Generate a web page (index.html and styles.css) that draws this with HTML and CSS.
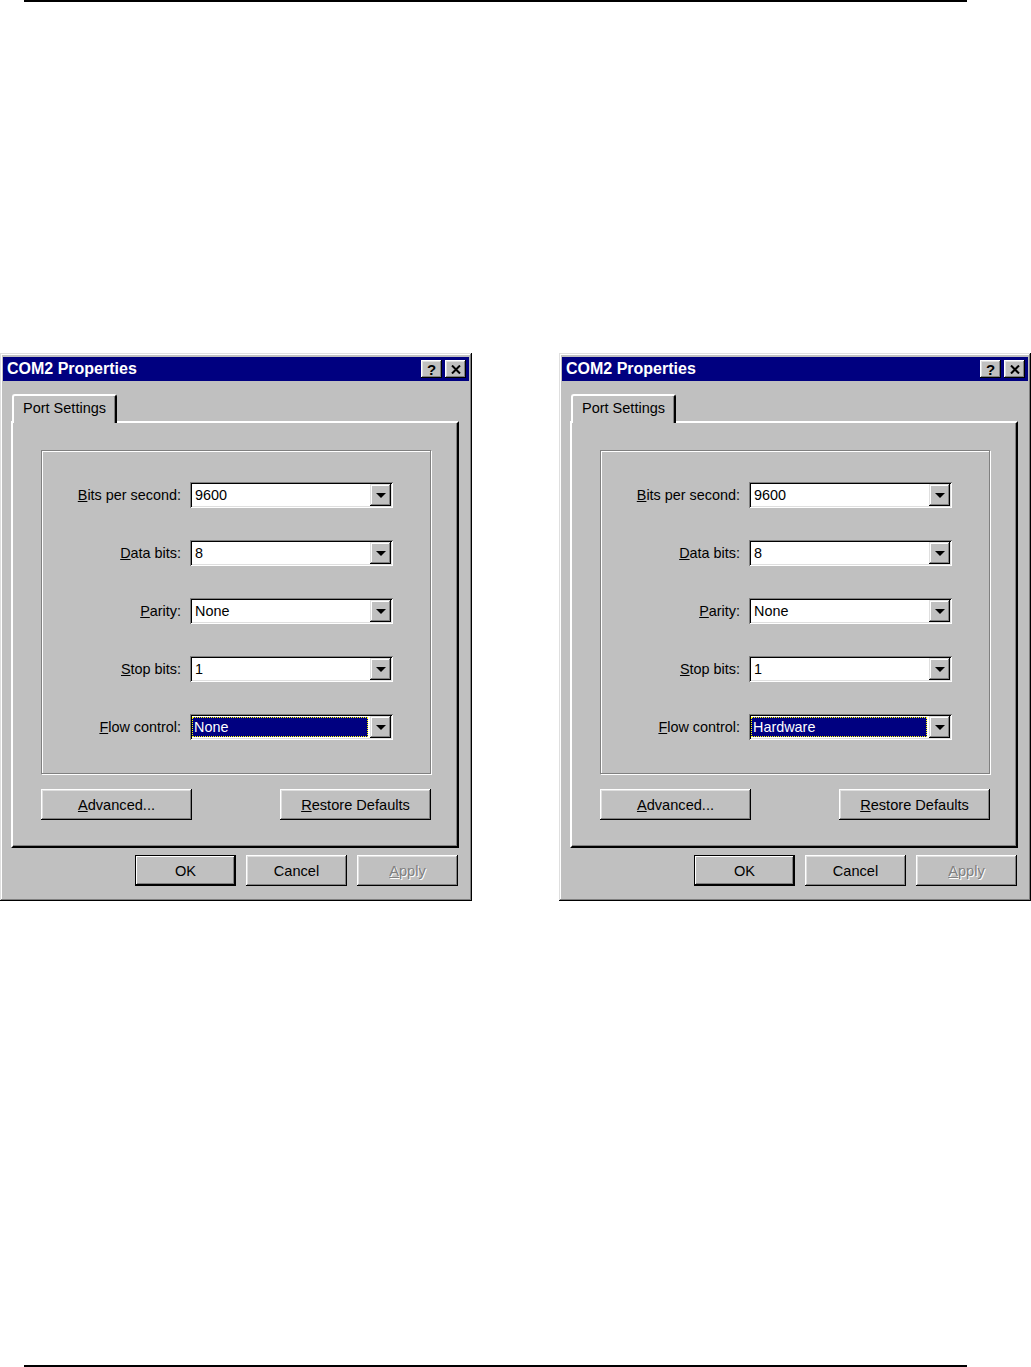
FILE: index.html
```html
<!DOCTYPE html>
<html lang="en">
  <head>
    <meta charset="UTF-8" />
    <meta name="viewport" content="width=device-width, initial-scale=1.0" />
    <title>COM2 Properties</title>
    <link rel="stylesheet" href="styles.css">
  </head>
  <body>
    <div class="page">
      <div class="rule"></div>

      <div class="dialogs">
        <!-- left: flow control none -->
        <div class="dialog">
          <div class="titlebar">
            <span class="title">COM2 Properties</span>
            <span class="title-btn help">?</span>
            <span class="title-btn close">
              <svg width="10" height="9" viewBox="0 0 10 9"><path d="M1 0.5 L9 8.5 M9 0.5 L1 8.5" stroke="#000" stroke-width="2"/></svg>
            </span>
          </div>
          <div class="body">
            <div class="tabs"><span class="tab">Port Settings</span></div>
            <div class="panel">
              <div class="group">
                <label><u>B</u>its per second:</label>
                <div class="combo"><span class="value">9600</span><span class="arrow"></span></div>
                <label><u>D</u>ata bits:</label>
                <div class="combo"><span class="value">8</span><span class="arrow"></span></div>
                <label><u>P</u>arity:</label>
                <div class="combo"><span class="value">None</span><span class="arrow"></span></div>
                <label><u>S</u>top bits:</label>
                <div class="combo"><span class="value">1</span><span class="arrow"></span></div>
                <label><u>F</u>low control:</label>
                <div class="combo"><span class="value selected">None</span><span class="arrow"></span></div>
              </div>
              <div class="panel-buttons">
                <button class="btn wide"><u>A</u>dvanced...</button>
                <button class="btn wide"><u>R</u>estore Defaults</button>
              </div>
            </div>
            <div class="footer">
              <button class="btn default">OK</button>
              <button class="btn">Cancel</button>
              <button class="btn disabled"><u>A</u>pply</button>
            </div>
          </div>
        </div>

        <!-- right: flow control hardware -->
        <div class="dialog">
          <div class="titlebar">
            <span class="title">COM2 Properties</span>
            <span class="title-btn help">?</span>
            <span class="title-btn close">
              <svg width="10" height="9" viewBox="0 0 10 9"><path d="M1 0.5 L9 8.5 M9 0.5 L1 8.5" stroke="#000" stroke-width="2"/></svg>
            </span>
          </div>
          <div class="body">
            <div class="tabs"><span class="tab">Port Settings</span></div>
            <div class="panel">
              <div class="group">
                <label><u>B</u>its per second:</label>
                <div class="combo"><span class="value">9600</span><span class="arrow"></span></div>
                <label><u>D</u>ata bits:</label>
                <div class="combo"><span class="value">8</span><span class="arrow"></span></div>
                <label><u>P</u>arity:</label>
                <div class="combo"><span class="value">None</span><span class="arrow"></span></div>
                <label><u>S</u>top bits:</label>
                <div class="combo"><span class="value">1</span><span class="arrow"></span></div>
                <label><u>F</u>low control:</label>
                <div class="combo"><span class="value selected">Hardware</span><span class="arrow"></span></div>
              </div>
              <div class="panel-buttons">
                <button class="btn wide"><u>A</u>dvanced...</button>
                <button class="btn wide"><u>R</u>estore Defaults</button>
              </div>
            </div>
            <div class="footer">
              <button class="btn default">OK</button>
              <button class="btn">Cancel</button>
              <button class="btn disabled"><u>A</u>pply</button>
            </div>
          </div>
        </div>
      </div>

      <div class="rule bottom"></div>
    </div>
  </body>
</html>
```

FILE: styles.css
```css
body {
  margin: 0;
  background-color: #fff;
  font-family: "Liberation Sans", Arial, sans-serif;
  font-size: 14.4px;
  color: #000;
}
.page {
  height: 1367px;
  display: flex;
  flex-direction: column;
}
.rule {
  width: 943px;
  margin-left: 24px;
  height: 2px;
  background-color: #000;
}
.rule.bottom {
  margin-top: auto;
}
.dialogs {
  display: flex;
  gap: 87px;
  margin-top: 351px;
}
.dialog {
  box-sizing: border-box;
  width: 472px;
  height: 548px;
  padding: 4px 3px 3px 3px;
  background-color: #c0c0c0;
  box-shadow: inset -1px -1px #000, inset 1px 1px #dfdfdf,
    inset -2px -2px #808080, inset 2px 2px #fff;
}
.titlebar {
  height: 24px;
  background-color: #000080;
  display: flex;
  align-items: center;
  padding: 0 3px 0 4px;
}
.title {
  flex: 1;
  color: #fff;
  font-weight: bold;
  font-size: 16px;
}
.title-btn {
  box-sizing: border-box;
  width: 21px;
  height: 18px;
  background-color: #c0c0c0;
  display: flex;
  align-items: center;
  justify-content: center;
  font-weight: bold;
  font-size: 15px;
  box-shadow: inset -1px -1px #000, inset 1px 1px #fff,
    inset -2px -2px #808080, inset 2px 2px #dfdfdf;
}
.title-btn.help {
  margin-right: 3px;
}
.body {
  padding: 13px 0 0 8px;
}
.tabs {
  height: 27px;
  position: relative;
  z-index: 1;
}
.tab {
  box-sizing: border-box;
  display: inline-block;
  height: 29px;
  margin-left: 1px;
  padding: 4px 9px 0 9px;
  border-top: 2px solid #fff;
  border-left: 2px solid #fff;
  border-right: 2px solid #000;
  border-radius: 3px 3px 0 0;
  background-color: #c0c0c0;
  box-shadow: inset -1px 0 #808080;
  font-size: 14.5px;
}
.panel {
  box-sizing: border-box;
  width: 448px;
  height: 427px;
  padding: 27px 0 0 28px;
  border-top: 2px solid #fff;
  border-left: 2px solid #fff;
  border-right: 2px solid #000;
  border-bottom: 2px solid #000;
  box-shadow: inset -1px -1px #808080;
}
.group {
  box-sizing: border-box;
  width: 390px;
  height: 324px;
  padding-top: 31px;
  border: 1px solid #808080;
  box-shadow: 1px 1px 0 #fff, inset 1px 1px 0 #fff;
  display: grid;
  grid-template-columns: 139px 203px;
  grid-auto-rows: 26px;
  column-gap: 9px;
  row-gap: 32px;
  align-content: start;
}
.group label {
  text-align: right;
  line-height: 26px;
}
.combo {
  box-sizing: border-box;
  display: flex;
  padding: 2px;
  background-color: #fff;
  box-shadow: inset 1px 1px #808080, inset -1px -1px #fff,
    inset 2px 2px #000, inset -2px -2px #dfdfdf;
}
.value {
  flex: 1;
  padding-left: 3px;
  line-height: 22px;
}
.value.selected {
  margin: 1px 2px 1px 0;
  padding-left: 2px;
  line-height: 20px;
  background-color: #000080;
  color: #fff;
  outline: 1px dotted #ffff00;
  outline-offset: -1px;
}
.arrow {
  box-sizing: border-box;
  width: 21px;
  height: 22px;
  background-color: #c0c0c0;
  display: flex;
  align-items: center;
  justify-content: center;
  box-shadow: inset -1px -1px #000, inset 1px 1px #dfdfdf,
    inset -2px -2px #808080, inset 2px 2px #fff;
}
.arrow::after {
  content: "";
  margin-top: 1px;
  border-left: 5px solid transparent;
  border-right: 5px solid transparent;
  border-top: 5px solid #000;
}
.panel-buttons {
  width: 390px;
  margin-top: 15px;
  display: flex;
  justify-content: space-between;
}
.btn {
  box-sizing: border-box;
  width: 101px;
  height: 31px;
  padding: 0;
  border: none;
  background-color: #c0c0c0;
  font-family: "Liberation Sans", Arial, sans-serif;
  font-size: 14.6px;
  color: #000;
  box-shadow: inset -1px -1px #000, inset 1px 1px #fff,
    inset -2px -2px #808080, inset 2px 2px #dfdfdf;
}
.btn.wide {
  width: 151px;
}
.btn.default {
  box-shadow: inset 0 0 0 1px #000, inset -2px -2px #000, inset 2px 2px #fff,
    inset -3px -3px #808080;
}
.btn.disabled {
  color: #808080;
  text-shadow: 1px 1px 0 #fff;
}
.footer {
  display: flex;
  justify-content: flex-end;
  gap: 10px;
  margin-top: 7px;
  padding-right: 11px;
}
```
